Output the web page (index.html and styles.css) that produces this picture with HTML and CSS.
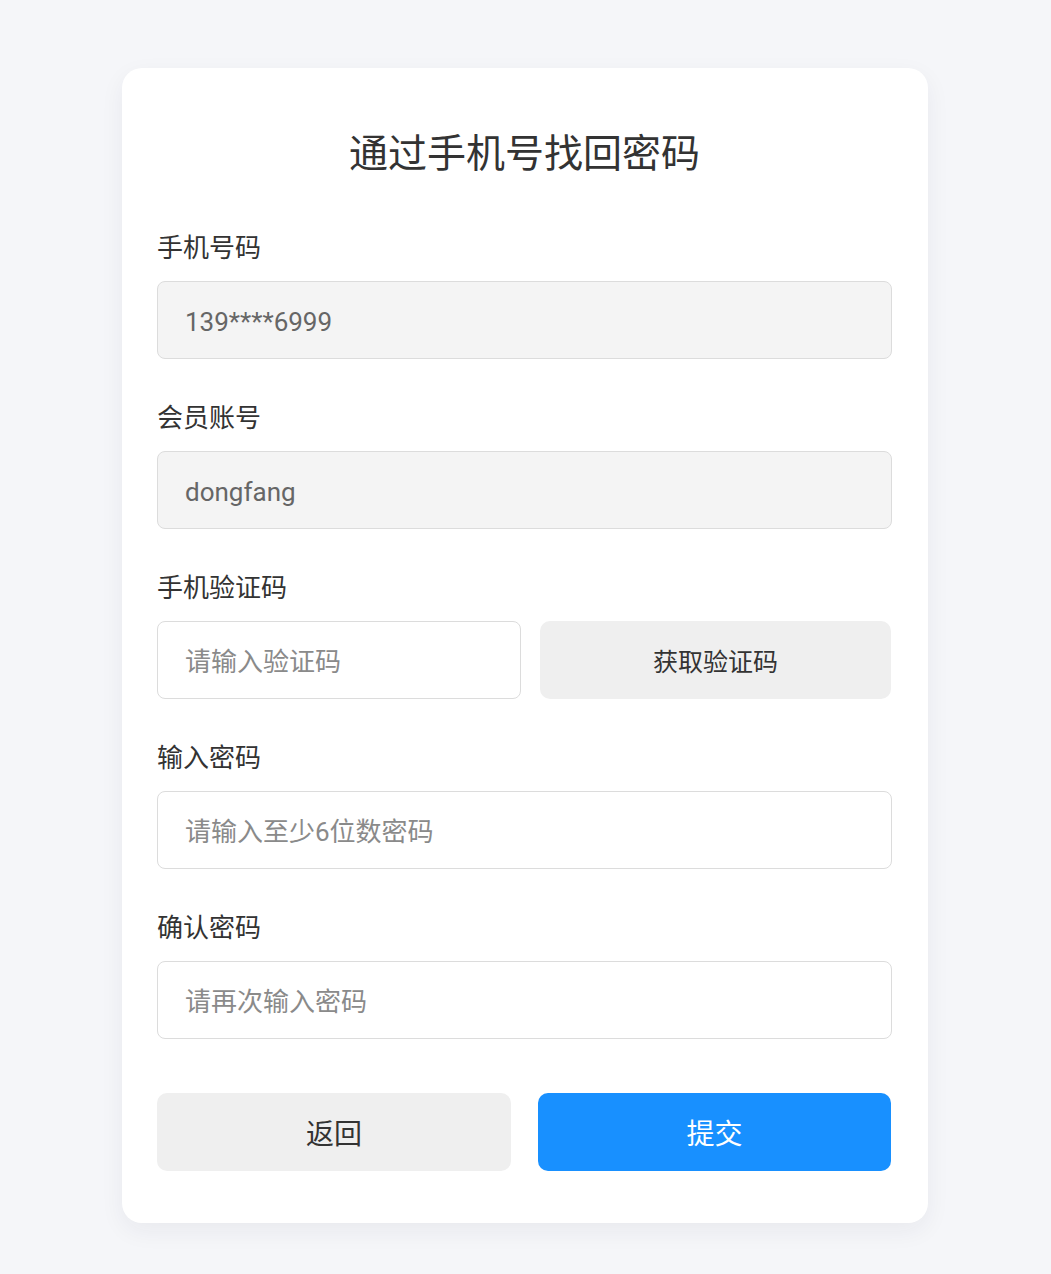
FILE: index.html
```html
<!DOCTYPE html>
<html lang="zh-CN">
<head>
<meta charset="utf-8">
<title>通过手机号找回密码</title>
<link rel="stylesheet" href="styles.css">
</head>
<body>
<main class="card">
  <h1 class="title">通过手机号找回密码</h1>
  <div class="field">
    <label class="label">手机号码</label>
    <input class="input input-disabled" type="text" value="139****6999" disabled>
  </div>
  <div class="field">
    <label class="label">会员账号</label>
    <input class="input input-disabled" type="text" value="dongfang" disabled>
  </div>
  <div class="field">
    <label class="label">手机验证码</label>
    <div class="code-row">
      <input class="input" type="text" placeholder="请输入验证码">
      <button class="btn btn-gray btn-code" type="button">获取验证码</button>
    </div>
  </div>
  <div class="field">
    <label class="label">输入密码</label>
    <input class="input" type="password" placeholder="请输入至少6位数密码">
  </div>
  <div class="field field-last">
    <label class="label">确认密码</label>
    <input class="input" type="password" placeholder="请再次输入密码">
  </div>
  <div class="actions">
    <button class="btn btn-gray btn-action" type="button">返回</button>
    <button class="btn btn-primary btn-action" type="button">提交</button>
  </div>
</main>
</body>
</html>
```
FILE: styles.css
```css
* { box-sizing: border-box; }
html, body { margin: 0; padding: 0; }
body {
  background: #f5f6f9;
  font-family: "Open Sans", "Noto Sans CJK SC", sans-serif;
  color: #333;
  padding-top: 68px;
  padding-bottom: 51px;
}
.card {
  width: 806px;
  margin: 0 0 0 122px;
  background: #fff;
  border-radius: 20px;
  box-shadow: 0 8px 24px rgba(30, 40, 70, 0.06);
  padding: 57px 36px 52px 35px;
}
.title {
  margin: 0 0 50px;
  text-align: center;
  font-size: 39px;
  line-height: 54px;
  font-weight: 400;
  color: #333;
}
.field {
  display: flex;
  flex-direction: column;
  margin-bottom: 40px;
}
.field-last { margin-bottom: 54px; }
.label {
  font-size: 26px;
  line-height: 36px;
  color: #333;
  margin-bottom: 16px;
}
.input {
  display: block;
  width: 100%;
  height: 78px;
  border: 1px solid #dcdcdc;
  border-radius: 8px;
  background: #fff;
  padding: 4px 27px 0;
  font-family: Roboto, "Noto Sans CJK SC", sans-serif;
  font-size: 26px;
  color: #666;
  outline: none;
}
.input::placeholder { color: #8a8a8a; }
.input-disabled {
  background: #f4f4f4;
  color: #666;
  -webkit-text-fill-color: #666;
  opacity: 1;
}
.code-row {
  display: grid;
  grid-template-columns: 364px 351px;
  column-gap: 19px;
}
.btn {
  border: none;
  height: 78px;
  border-radius: 10px;
  font-family: "Open Sans", "Noto Sans CJK SC", sans-serif;
  cursor: pointer;
}
.btn-gray { background: #efefef; color: #333; }
.btn-primary { background: #1890ff; color: #fff; }
.btn-code { font-size: 25px; }
.actions {
  display: grid;
  grid-template-columns: 354px 353px;
  column-gap: 27px;
}
.btn-action { font-size: 28px; }
```
